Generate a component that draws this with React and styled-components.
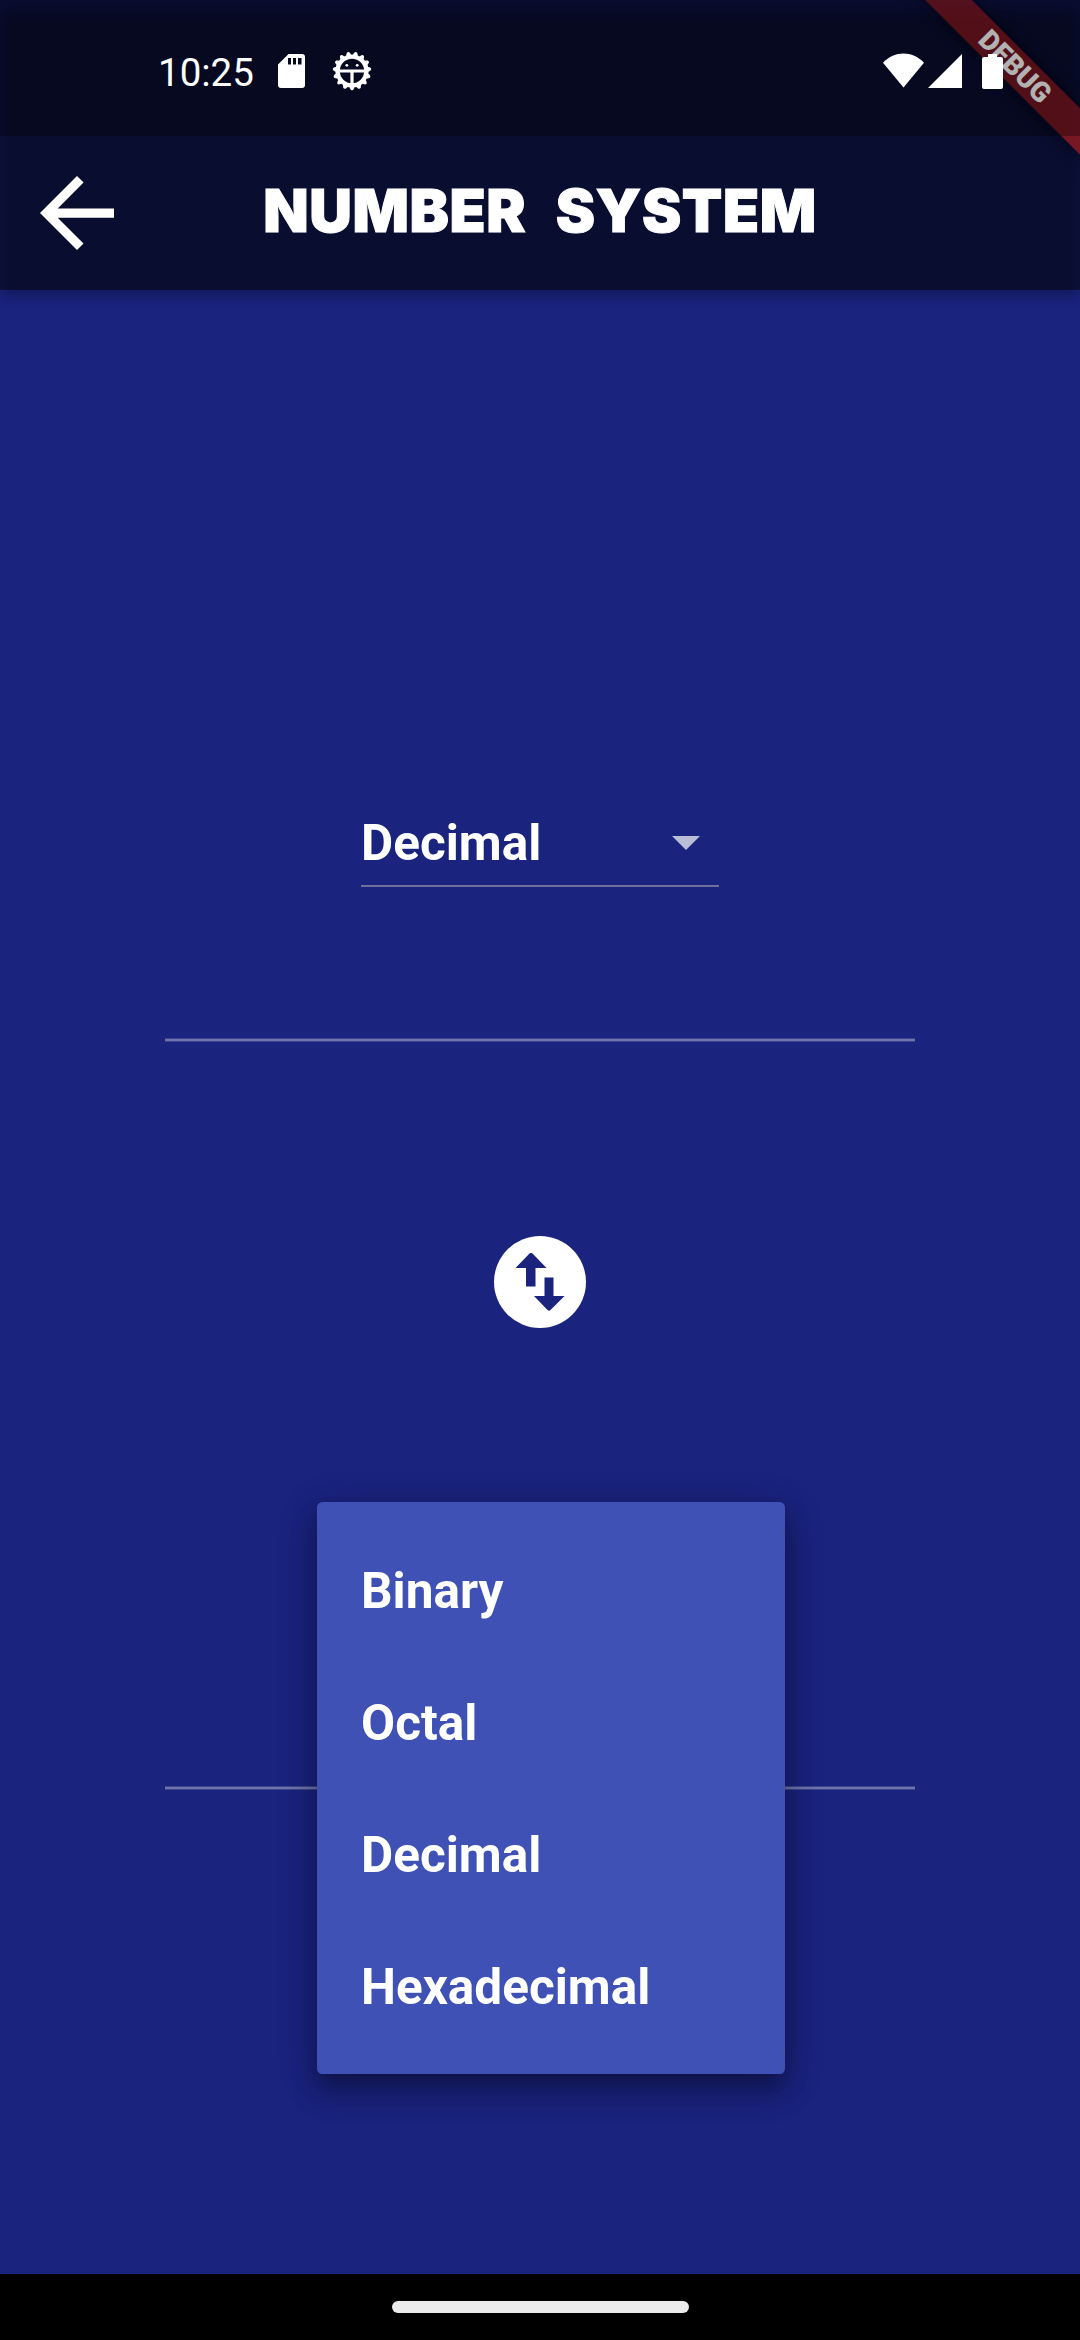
import React from "react";
import styled, { createGlobalStyle } from "styled-components";

const GlobalStyle = createGlobalStyle`
  * { box-sizing: border-box; }
  body { margin: 0; background: #1a237e; }
`;

const Screen = styled.div`
  position: relative;
  display: flex;
  flex-direction: column;
  width: 1080px;
  height: 2340px;
  overflow: hidden;
  background: #1a237e;
  color: #fff;
  font-family: Roboto, "Liberation Sans", sans-serif;
`;

const Header = styled.header`
  position: relative;
  z-index: 0;
  flex: none;
  display: flex;
  flex-direction: column;
  height: 290px;
  background: rgba(0, 0, 0, 0.46);
  &::before {
    content: "";
    position: absolute;
    z-index: -1;
    inset: 11px 1px -5px 1px;
    background: rgba(0, 0, 0, 0.31);
    filter: blur(7px);
  }
`;

const StatusBar = styled.div`
  position: relative;
  z-index: 2;
  flex: none;
  display: flex;
  justify-content: space-between;
  height: 136px;
  padding: 48px 77px 0 158px;
  background: rgba(0, 0, 0, 0.3);
`;

const StatusGroup = styled.div`
  display: flex;
  align-items: flex-start;
`;

const Clock = styled.span`
  width: 120px;
  font-size: 38.5px;
  line-height: 50px;
`;

const StatusIcon = styled.svg`
  flex: none;
  display: block;
  width: ${(p) => p.$w}px;
  height: ${(p) => p.$h}px;
  margin-left: ${(p) => p.$gap || 0}px;
  margin-top: ${(p) => p.$drop || 0}px;
  fill: #fff;
`;

const AppBar = styled.div`
  flex: 1;
  display: grid;
  grid-template-columns: 154px 1fr 154px;
  align-items: center;
`;

const BackButton = styled.button`
  display: flex;
  justify-content: center;
  padding: 0;
  border: 0;
  background: none;
`;

const Title = styled.h1`
  margin: 0;
  padding-bottom: 4px;
  text-align: center;
  white-space: nowrap;
  font: 900 59px/76px Inter, "Liberation Sans", sans-serif;
  letter-spacing: 0.6px;
  word-spacing: 17px;
  -webkit-text-stroke: 1px #fff;
`;

const DebugBanner = styled.div`
  position: absolute;
  z-index: 1;
  left: 814px;
  top: 49px;
  width: 400px;
  height: 33px;
  padding-left: 3px;
  transform: rotate(45deg);
  background: rgba(183, 28, 28, 0.63);
  box-shadow: 0 0 16px rgba(0, 0, 0, 0.5);
  text-align: center;
  font-size: 28px;
  font-weight: 900;
  line-height: 33px;
`;

const Main = styled.main`
  flex: 1;
  display: flex;
  flex-direction: column;
  align-items: center;
`;

const Select = styled.div`
  display: flex;
  justify-content: space-between;
  align-items: flex-start;
  width: 358px;
  height: 77px;
  margin-top: 520px;
  padding-right: 19px;
  border-bottom: 2px solid #6f719c;
  font-size: 49.5px;
  font-weight: 700;
  line-height: 66px;
`;

const Caret = styled.svg`
  width: 28px;
  height: 14px;
  margin-top: 26px;
  fill: #babdd8;
`;

const Field = styled.div`
  width: 750px;
  height: 4px;
  margin-top: ${(p) => p.$gap}px;
  border: solid #3d458f;
  border-width: 1px 0;
  background: #7074ac;
`;

const SwapButton = styled.button`
  display: flex;
  justify-content: center;
  align-items: center;
  width: 92px;
  height: 92px;
  margin-top: 194px;
  padding: 0;
  border: 0;
  border-radius: 50%;
  background: #fff;
`;

const Menu = styled.ul`
  position: absolute;
  left: 317px;
  top: 1502px;
  width: 467.5px;
  height: 572px;
  margin: 0;
  padding: 23px 44px 21px;
  list-style: none;
  border-radius: 5.5px;
  background: #3f51b5;
  box-shadow: 0 14px 14px -8px rgba(0, 0, 0, 0.2), 0 22px 28px 3px rgba(0, 0, 0, 0.14), 0 8px 38px 5px rgba(0, 0, 0, 0.12), 0 6px 30px rgba(0, 0, 0, 0.14);
`;

const MenuItem = styled.li`
  display: flex;
  align-items: center;
  height: 132px;
  font-size: 49.5px;
  font-weight: 700;
`;

const NavigationBar = styled.footer`
  flex: none;
  display: flex;
  justify-content: center;
  height: 66px;
  padding-top: 27px;
  background: #000;
`;

const HomeHandle = styled.div`
  width: 297px;
  height: 12px;
  border-radius: 6px;
  background: #ebebeb;
`;

const OPTIONS = ["Binary", "Octal", "Decimal", "Hexadecimal"];

const GearIcon = () => (
  <StatusIcon viewBox="0 0 40 40" $w={40} $h={40} $gap={27} $drop={3}>
    {Array.from({ length: 15 }, (_, i) => (
      <path key={i} d="M17.7 37L18.8 38.8Q20 39.800 21.200 38.800L22.300 37V33H17.700Z" transform={`rotate(${i * 24} 20 20)`} />
    ))}
    <circle cx="20" cy="20" r="14.4" fill="none" stroke="#fff" strokeWidth="4.400" />
    <path d="M7 18.500H33V21.600H21.600V34H18.400V21.600H7Z" />
    <circle cx="14.800" cy="14.300" r="1.400" />
    <circle cx="25.200" cy="14.300" r="1.400" />
  </StatusIcon>
);

export default function App() {
  return (
    <Screen>
      <GlobalStyle />
      <Header>
        <DebugBanner>DEBUG</DebugBanner>
        <StatusBar>
          <StatusGroup>
            <Clock>10:25</Clock>
            <StatusIcon viewBox="0 0 27 34" $w={27} $h={34} $drop={6}>
              <path fillRule="evenodd" d="M10.5 0H24Q27 0 27 3V31Q27 34 24 34H3Q0 34 0 31V10.5ZM10 4V10.5H13V4ZM15 4V10.5H18V4ZM20 4V10.5H23.5V4Z" />
            </StatusIcon>
            <GearIcon />
          </StatusGroup>
          <StatusGroup>
            <StatusIcon viewBox="0 0 42 35" $w={41} $h={35} $drop={5}>
              <path d="M21 35L0 9.5C12 -3 30 -3 42 9.5Z" />
            </StatusIcon>
            <StatusIcon viewBox="0 0 34 34" $w={34} $h={34} $gap={4} $drop={6}>
              <path d="M34 0V34H0Z" />
            </StatusIcon>
            <StatusIcon viewBox="0 0 21 35" $w={21} $h={35} $gap={20} $drop={6}>
              <path d="M6 0H15V3H19Q21 3 21 5V33Q21 35 19 35H2Q0 35 0 33V5Q0 3 2 3H6Z" />
            </StatusIcon>
          </StatusGroup>
        </StatusBar>
        <AppBar>
          <BackButton aria-label="Back">
            <svg width="74" height="74" viewBox="4 4 16 16" fill="#fff">
              <path d="M20 11H7.83l5.59-5.59L12 4l-8 8 8 8 1.41-1.41L7.83 13H20v-2z" />
            </svg>
          </BackButton>
          <Title>NUMBER SYSTEM</Title>
        </AppBar>
      </Header>
      <Main>
        <Select>
          Decimal
          <Caret viewBox="0 0 28 14">
            <path d="M0 0H28L14 14Z" />
          </Caret>
        </Select>
        <Field $gap={151} />
        <SwapButton aria-label="Swap">
          <svg width="92" height="92" viewBox="0 0 92 92" fill="#1a237e">
            <path d="M37 17Q35.5 17 35 18L21.5 32H32V50.5H41.5V32H52.5L39 18Q38.5 17 37 17ZM50.5 41.5V60H40L53.5 74Q55 75.5 56.5 74L70.5 60H59.5V41.5Z" />
          </svg>
        </SwapButton>
        <Field $gap={458} />
      </Main>
      <NavigationBar>
        <HomeHandle />
      </NavigationBar>
      <Menu>
        {OPTIONS.map((option) => (
          <MenuItem key={option}>{option}</MenuItem>
        ))}
      </Menu>
    </Screen>
  );
}
